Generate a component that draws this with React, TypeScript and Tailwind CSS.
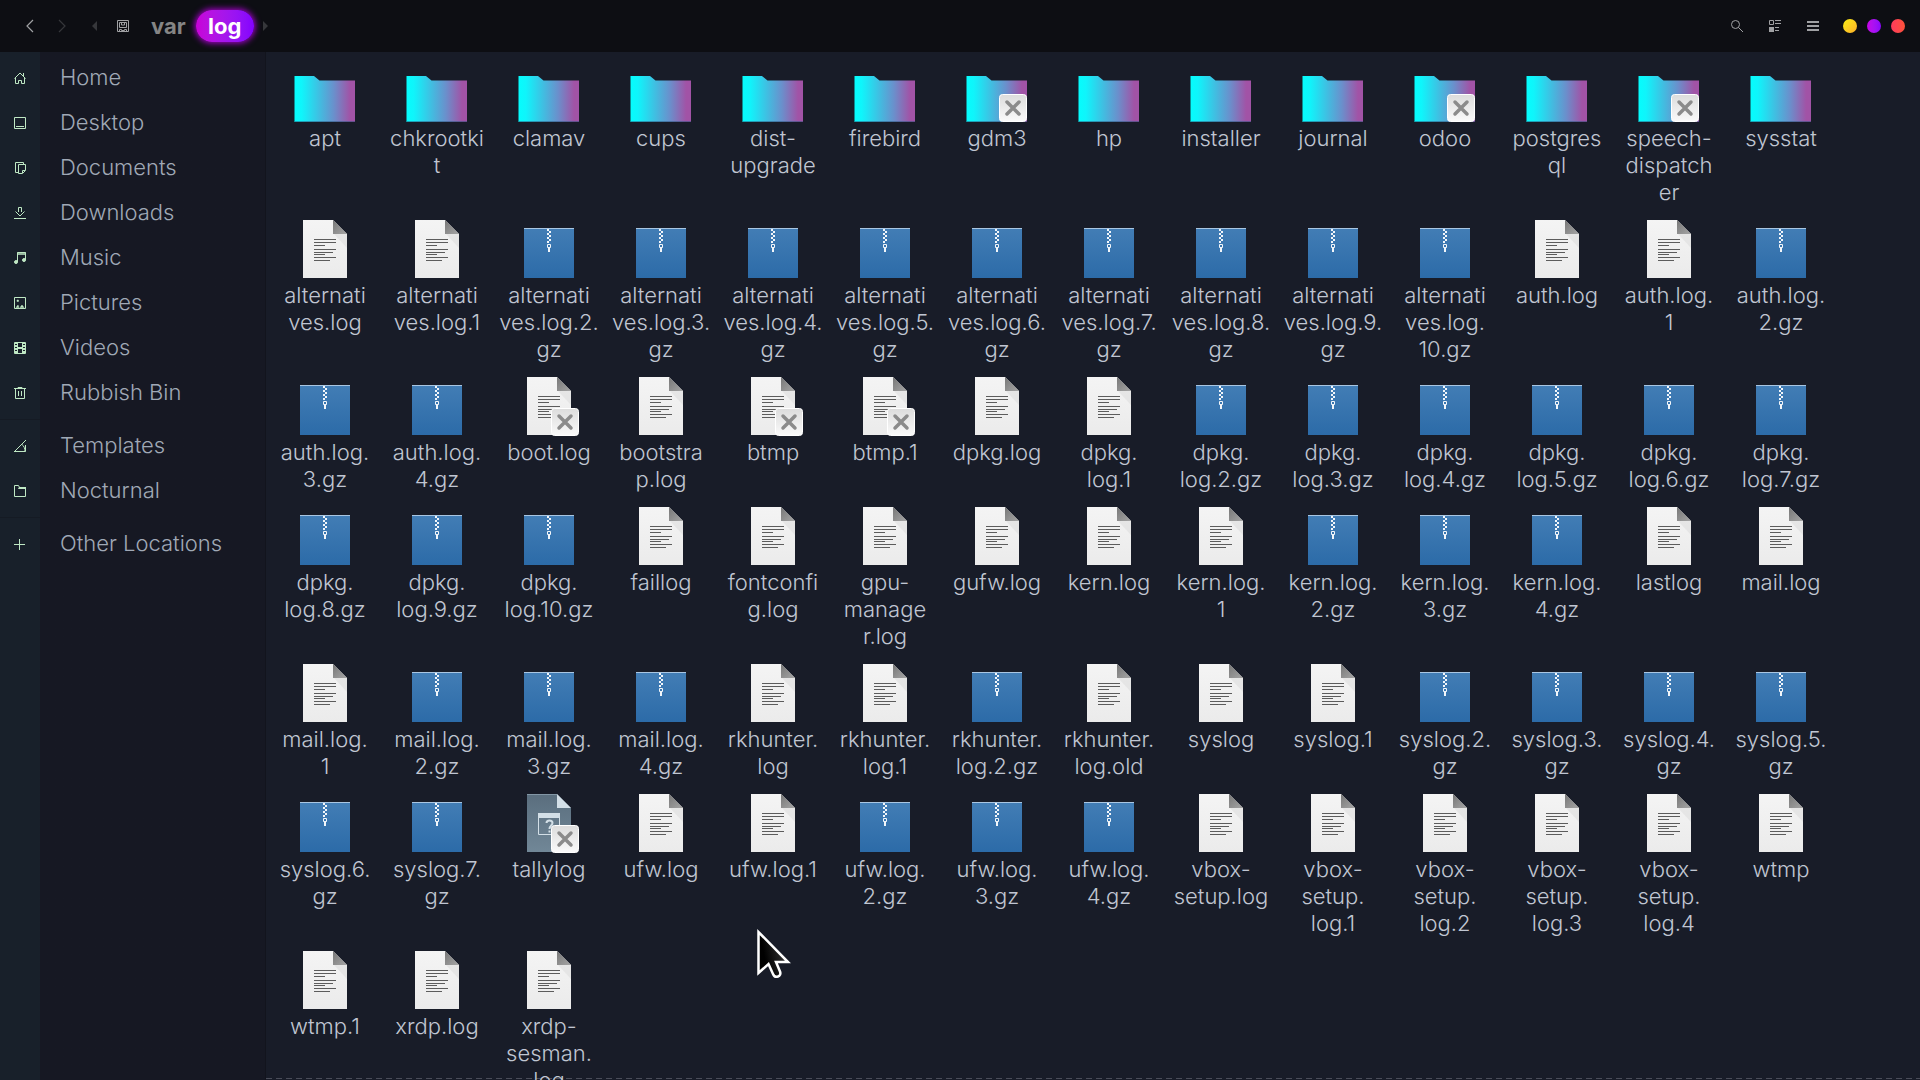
import React from "react";

type Kind = "folder" | "text" | "archive" | "unknown";

type Entry = {
  name: string;
  kind: Kind;
  locked?: boolean;
};

// "|" marks where a long name breaks onto the next line
const folders = [
  "apt", "chkrootki|t", "clamav", "cups", "dist-|upgrade", "firebird", "gdm3", "hp",
  "installer", "journal", "odoo", "postgres|ql", "speech-|dispatch|er", "sysstat",
];

const files = [
  "alternati|ves.log", "alternati|ves.log.1", "alternati|ves.log.2.|gz", "alternati|ves.log.3.|gz",
  "alternati|ves.log.4.|gz", "alternati|ves.log.5.|gz", "alternati|ves.log.6.|gz",
  "alternati|ves.log.7.|gz", "alternati|ves.log.8.|gz", "alternati|ves.log.9.|gz",
  "alternati|ves.log.|10.gz", "auth.log", "auth.log.|1", "auth.log.|2.gz",
  "auth.log.|3.gz", "auth.log.|4.gz", "boot.log", "bootstra|p.log", "btmp", "btmp.1",
  "dpkg.log", "dpkg.|log.1", "dpkg.|log.2.gz", "dpkg.|log.3.gz", "dpkg.|log.4.gz",
  "dpkg.|log.5.gz", "dpkg.|log.6.gz", "dpkg.|log.7.gz", "dpkg.|log.8.gz", "dpkg.|log.9.gz",
  "dpkg.|log.10.gz", "faillog", "fontconfi|g.log", "gpu-|manage|r.log", "gufw.log",
  "kern.log", "kern.log.|1", "kern.log.|2.gz", "kern.log.|3.gz", "kern.log.|4.gz",
  "lastlog", "mail.log", "mail.log.|1", "mail.log.|2.gz", "mail.log.|3.gz", "mail.log.|4.gz",
  "rkhunter.|log", "rkhunter.|log.1", "rkhunter.|log.2.gz", "rkhunter.|log.old",
  "syslog", "syslog.1", "syslog.2.|gz", "syslog.3.|gz", "syslog.4.|gz", "syslog.5.|gz",
  "syslog.6.|gz", "syslog.7.|gz", "tallylog", "ufw.log", "ufw.log.1", "ufw.log.|2.gz",
  "ufw.log.|3.gz", "ufw.log.|4.gz", "vbox-|setup.log", "vbox-|setup.|log.1",
  "vbox-|setup.|log.2", "vbox-|setup.|log.3", "vbox-|setup.|log.4", "wtmp",
  "wtmp.1", "xrdp.log", "xrdp-|sesman.|log",
];

const lockedNames = ["gdm3", "odoo", "speech-|dispatch|er", "boot.log", "btmp", "btmp.1", "tallylog"];

const fileKind = (name: string): Kind => {
  if (name === "tallylog") return "unknown";
  return name.endsWith("gz") ? "archive" : "text";
};

const entries: Entry[] = [
  ...folders.map((name) => ({ name, kind: "folder" as Kind, locked: lockedNames.includes(name) })),
  ...files.map((name) => ({ name, kind: fileKind(name), locked: lockedNames.includes(name) })),
];

const places = [
  [
    { label: "Home", icon: <path d="M.5 6.5 6 1l5.500 5.500M1.500 5.500v6h3v-3h3v3h3v-6M9.500 1v3" /> },
    { label: "Desktop", icon: <path d="M.5.5h11v11H.5zM2 9.500h8" /> },
    { label: "Documents", icon: <path d="M9.5 2V.5h-8v10H4M4.500 2.500h7v6l-3 3h-4zM8.500 11V8.500H11" /> },
    { label: "Downloads", icon: <path d="M0 11.5h12M1.500 4.500 6 9l4.500-4.500M4.500 5V.5h3V5" /> },
    {
      label: "Music",
      icon: (
        <>
          <path d="M3.5 10V.5h8V8M3.500 2h8" />
          <path d="M3 0h9v3H3z" fill="currentColor" fillOpacity="0.5" stroke="none" />
          <circle cx="2" cy="10" r="1.5" fill="currentColor" />
          <circle cx="10" cy="8" r="1.5" fill="currentColor" />
        </>
      ),
    },
    {
      label: "Pictures",
      icon: (
        <>
          <path d="M.5.5h11v11H.5z" />
          <path d="M2 10.500 4 8l1 2.500zM6 10.500 8 8l2 2.500zM3 3h1.500v1.500H3z" fill="currentColor" strokeWidth="0.5" />
        </>
      ),
    },
    {
      label: "Videos",
      icon: (
        <>
          <path d="M.5.5h11v11H.5zM3.500 0v12M8.500 0v12" />
          <path d="M3 6h6" strokeWidth="2" />
          <path d="M2 0v12M10 0v12" strokeWidth="2" strokeDasharray="2 1" />
        </>
      ),
    },
    { label: "Rubbish Bin", icon: <path d="M0 1.5h12M4 1V.5h4V1M1.500 2v9.500h9V2M4.500 4v5M7.500 4v5" /> },
  ],
  [
    { label: "Templates", icon: <path d="M0 11.5h11.500V5M.5 11.500 12 0M8 4.500c2 1.500 3 4 3 7" /> },
    {
      label: "Nocturnal",
      icon: (
        <>
          <path d="M.5 11.5V.5h4l1 2h6v9z" />
          <path d="M5 2h7v2H4z" fill="currentColor" stroke="none" />
        </>
      ),
    },
  ],
  [{ label: "Other Locations", icon: <path d="M0 6.5h11M5.500 1v11" /> }],
];

function FolderIcon() {
  return (
    <>
      <path d="M1.5 16H21l5.500 4.500H62V62H1.500z" fill="url(#folder-fill)" />
      <path d="M2 61.5h60" stroke="#2a4f78" strokeOpacity="0.5" />
    </>
  );
}

function TextIcon() {
  return (
    <>
      <path d="M10 3h30l14 14v44H10z" fill="url(#paper-fill)" />
      <path d="M41 17h13v14z" fill="#dedede" opacity="0.6" />
      <path d="M40 3v14h14z" fill="url(#fold-fill)" />
      <path
        d="M21 22.5h22M21 25.500h22M21 28.500h11M21 32.500h22M21 35.500h19M21 37.500h11M21 40.500h22M21 43.500h16"
        stroke="#5c5c5c"
      />
    </>
  );
}

function ArchiveIcon() {
  return (
    <>
      <path d="M7 11h50v50H7z" fill="url(#archive-fill)" />
      <path d="M7 11.5h50" stroke="#a9c6e2" />
      <path d="M31 12v14" stroke="#f2f6fa" strokeWidth="2" strokeDasharray="2 2" />
      <path d="M33 14v12" stroke="#f2f6fa" strokeWidth="2" strokeDasharray="2 2" />
      <path d="M30.5 27.500h3v3h-3z" fill="none" stroke="#f2f6fa" />
      <path d="M31 31h2v4h-2z" fill="#f2f6fa" />
    </>
  );
}

function UnknownIcon() {
  return (
    <>
      <path d="M10 3h30l14 14v44H10z" fill="url(#unknown-fill)" />
      <path d="M10 3.5h30" stroke="#8296a5" />
      <path d="M40 3v14h14z" fill="#d3dfe7" />
      <path d="M21.5 22.500h21v21h-21z" fill="none" stroke="#d3dfe7" />
      <path d="M21 22h22v5H21z" fill="#d3dfe7" />
      <path d="M29.5 32c0-3.500 6-3.500 6 0 0 2.500-3 2.500-3 6M32.500 39.500v2" fill="none" stroke="#d3dfe7" strokeWidth="2" />
    </>
  );
}

function Emblem() {
  return (
    <>
      <rect x="34.5" y="34.5" width="27" height="27" rx="3" fill="url(#emblem-fill)" stroke="#ffffff" />
      <path d="m42 42 12 12M54 42 42 54" stroke="#8b8b8b" strokeWidth="3.5" strokeLinecap="round" />
    </>
  );
}

const kindIcons: Record<Kind, React.ReactNode> = {
  folder: <FolderIcon />,
  text: <TextIcon />,
  archive: <ArchiveIcon />,
  unknown: <UnknownIcon />,
};

function SharedGradients() {
  return (
    <svg className="absolute h-0 w-0" aria-hidden="true">
      <defs>
        <linearGradient id="folder-fill">
          <stop offset="0" stopColor="#05fdfd" />
          <stop offset="0.12" stopColor="#0ff5fb" />
          <stop offset="0.65" stopColor="#6a90cc" />
          <stop offset="0.92" stopColor="#a153a6" />
          <stop offset="1" stopColor="#a153a6" />
        </linearGradient>
        <linearGradient id="paper-fill" x2="0" y2="1">
          <stop offset="0" stopColor="#f4f4f4" />
          <stop offset="1" stopColor="#ebebeb" />
        </linearGradient>
        <linearGradient id="fold-fill" x2="1" y2="1">
          <stop offset="0" stopColor="#777777" />
          <stop offset="1" stopColor="#a5a5a5" />
        </linearGradient>
        <linearGradient id="archive-fill" x2="0" y2="1">
          <stop offset="0" stopColor="#427db5" />
          <stop offset="1" stopColor="#2c6ba8" />
        </linearGradient>
        <linearGradient id="unknown-fill" x2="0" y2="1">
          <stop offset="0" stopColor="#5a6e7e" />
          <stop offset="1" stopColor="#718797" />
        </linearGradient>
        <linearGradient id="emblem-fill" x2="0" y2="1">
          <stop offset="0" stopColor="#dcdcdc" />
          <stop offset="1" stopColor="#fafafa" />
        </linearGradient>
      </defs>
    </svg>
  );
}

function FileTile({ entry }: { entry: Entry }) {
  return (
    <li>
      <button type="button" className="flex w-full flex-col items-center">
        <svg className="h-16 w-16" viewBox="0 0 64 64" aria-hidden="true">
          {kindIcons[entry.kind]}
          {entry.locked && <Emblem />}
        </svg>
        <span className="whitespace-pre pt-px text-center text-[22px] font-light leading-[27px]">
          {entry.name.split("|").join("\n")}
        </span>
      </button>
    </li>
  );
}

function TitleBar() {
  return (
    <header className="flex h-[52px] shrink-0 items-center justify-between bg-[#0d0e13] pl-4 pr-[15px] text-[#a0a1a4]">
      <nav className="flex items-center" aria-label="Path">
        <button type="button" aria-label="Back" className="flex w-7 justify-center">
          <svg className="h-3.5 w-2" viewBox="0 0 8 14" fill="none" stroke="currentColor">
            <path d="M7 1 1 7l6 6" strokeWidth="1.2" />
          </svg>
        </button>
        <button type="button" aria-label="Forward" className="ml-1 flex w-7 justify-center text-[#36373b]">
          <svg className="h-3.5 w-2" viewBox="0 0 8 14" fill="none" stroke="currentColor">
            <path d="m1 1 6 6-6 6" strokeWidth="1.2" />
          </svg>
        </button>
        <button type="button" aria-label="Scroll left" className="ml-4 text-[#36373b]">
          <svg className="h-2.5 w-[5px]" viewBox="0 0 5 10" fill="currentColor">
            <path d="M5 0v10L0 5z" />
          </svg>
        </button>
        <button type="button" aria-label="File system root" className="ml-5">
          <svg className="h-3 w-3" viewBox="0 0 12 12" fill="none" stroke="currentColor">
            <path d="M.5.5h11v11H.5zM2.500 2.500h7v5h-7zM4.500 3v2h3V3M2.500 11V9.500h2v1h3v-1h2V11" />
          </svg>
        </button>
        <button type="button" className="ml-[22px] text-[22px] font-bold leading-8 text-[#858585]">
          var
        </button>
        <button
          type="button"
          className="ml-[10px] h-8 w-[58px] rounded-full bg-linear-to-r from-[#c800d8] to-[#8400ff] text-[22px] font-bold leading-8 text-white shadow-[0_0_6px_1px_#b000d8]"
        >
          log
        </button>
        <button type="button" aria-label="Scroll right" className="ml-[9px] text-[#36373b]">
          <svg className="h-2.5 w-[5px]" viewBox="0 0 5 10" fill="currentColor">
            <path d="M0 0v10l5-5z" />
          </svg>
        </button>
      </nav>
      <div className="flex items-center">
        <button type="button" aria-label="Search">
          <svg className="h-3 w-3" viewBox="0 0 12 12" fill="none" stroke="currentColor">
            <circle cx="4.5" cy="4.5" r="4" />
            <path d="m7.5 7.500 4.500 4.500" />
          </svg>
        </button>
        <button type="button" aria-label="View options" className="ml-[26px]">
          <svg className="h-3 w-3" viewBox="0 0 12 12" fill="none" stroke="currentColor">
            <path d="M.5.5h4v4h-4zM6 .5h6M6 3.500h6M6 7.500h4M6 10.500h4" />
            <path d="M0 7h5v5H0z" fill="currentColor" stroke="none" />
          </svg>
        </button>
        <button type="button" aria-label="Menu" className="ml-[26px]">
          <svg className="h-3 w-3" viewBox="0 0 12 12" fill="currentColor">
            <path d="M0 1h12v2H0zM0 5h12v2H0zM0 9h12v2H0z" />
          </svg>
        </button>
        <div className="ml-6 flex gap-2.5">
          <button type="button" aria-label="Minimise" className="h-3.5 w-3.5 rounded-full bg-linear-to-br from-[#f8ee10] to-[#fcae28]" />
          <button type="button" aria-label="Maximise" className="h-3.5 w-3.5 rounded-full bg-linear-to-r from-[#c800e8] to-[#8a04fc]" />
          <button type="button" aria-label="Close" className="h-3.5 w-3.5 rounded-full bg-linear-to-r from-[#ff3a5c] to-[#fc5138]" />
        </div>
      </div>
    </header>
  );
}

function Sidebar() {
  return (
    <aside className="w-[266px] shrink-0 border-r border-[#12141d] bg-linear-to-r from-[#18202a] from-[40px] to-[#161823] to-[40px] pt-[3px]">
      {places.map((group, index) => (
        <div key={index}>
          {index > 0 && (
            <div className="flex h-2 items-center">
              <hr className="w-10 border-[#151b24]" />
            </div>
          )}
          <ul>
            {group.map((place) => (
              <li key={place.label}>
                <a href="#" className="flex h-[45px] items-center pl-3.5 text-[22px] font-light text-[#a0a9b6]">
                  <svg className="h-3 w-3 text-[#bfe8c4]" viewBox="0 0 12 12" fill="none" stroke="currentColor" aria-hidden="true">
                    {place.icon}
                  </svg>
                  <span className="ml-[34px]">{place.label}</span>
                </a>
              </li>
            ))}
          </ul>
        </div>
      ))}
    </aside>
  );
}

function Pointer() {
  return (
    <svg className="pointer-events-none absolute left-[755px] top-[926px] h-14 w-9" viewBox="0 0 36 56" aria-hidden="true">
      <defs>
        <linearGradient id="pointer-fill" x1="0" x2="1" y1="0.6" y2="0.3">
          <stop offset="0.2" stopColor="#000000" />
          <stop offset="1" stopColor="#3a3a3a" />
        </linearGradient>
      </defs>
      <path
        d="M3.5 6v41l10-9 4.500 10c2 5 9 2.500 7-2.500L21 36h12z"
        fill="url(#pointer-fill)"
        stroke="#ffffff"
        strokeWidth="2.5"
      />
    </svg>
  );
}

function App() {
  return (
    <div className="relative flex h-screen flex-col overflow-hidden bg-[#181c28] font-['Inter','Liberation_Sans',sans-serif]">
      <SharedGradients />
      <TitleBar />
      <div className="flex min-h-0 flex-1">
        <Sidebar />
        <main className="relative min-w-0 flex-1 overflow-hidden pl-[3px] pt-2 text-[#c0c6d2]">
          <div className="absolute inset-x-0 bottom-px h-px bg-[repeating-linear-gradient(90deg,#4a4d59_0_6px,transparent_6px_10px)]" />
          <ul className="relative grid grid-cols-[repeat(auto-fill,112px)] gap-y-[11px]">
            {entries.map((entry) => (
              <FileTile key={entry.name} entry={entry} />
            ))}
          </ul>
        </main>
      </div>
      <Pointer />
    </div>
  );
}

export default App;
